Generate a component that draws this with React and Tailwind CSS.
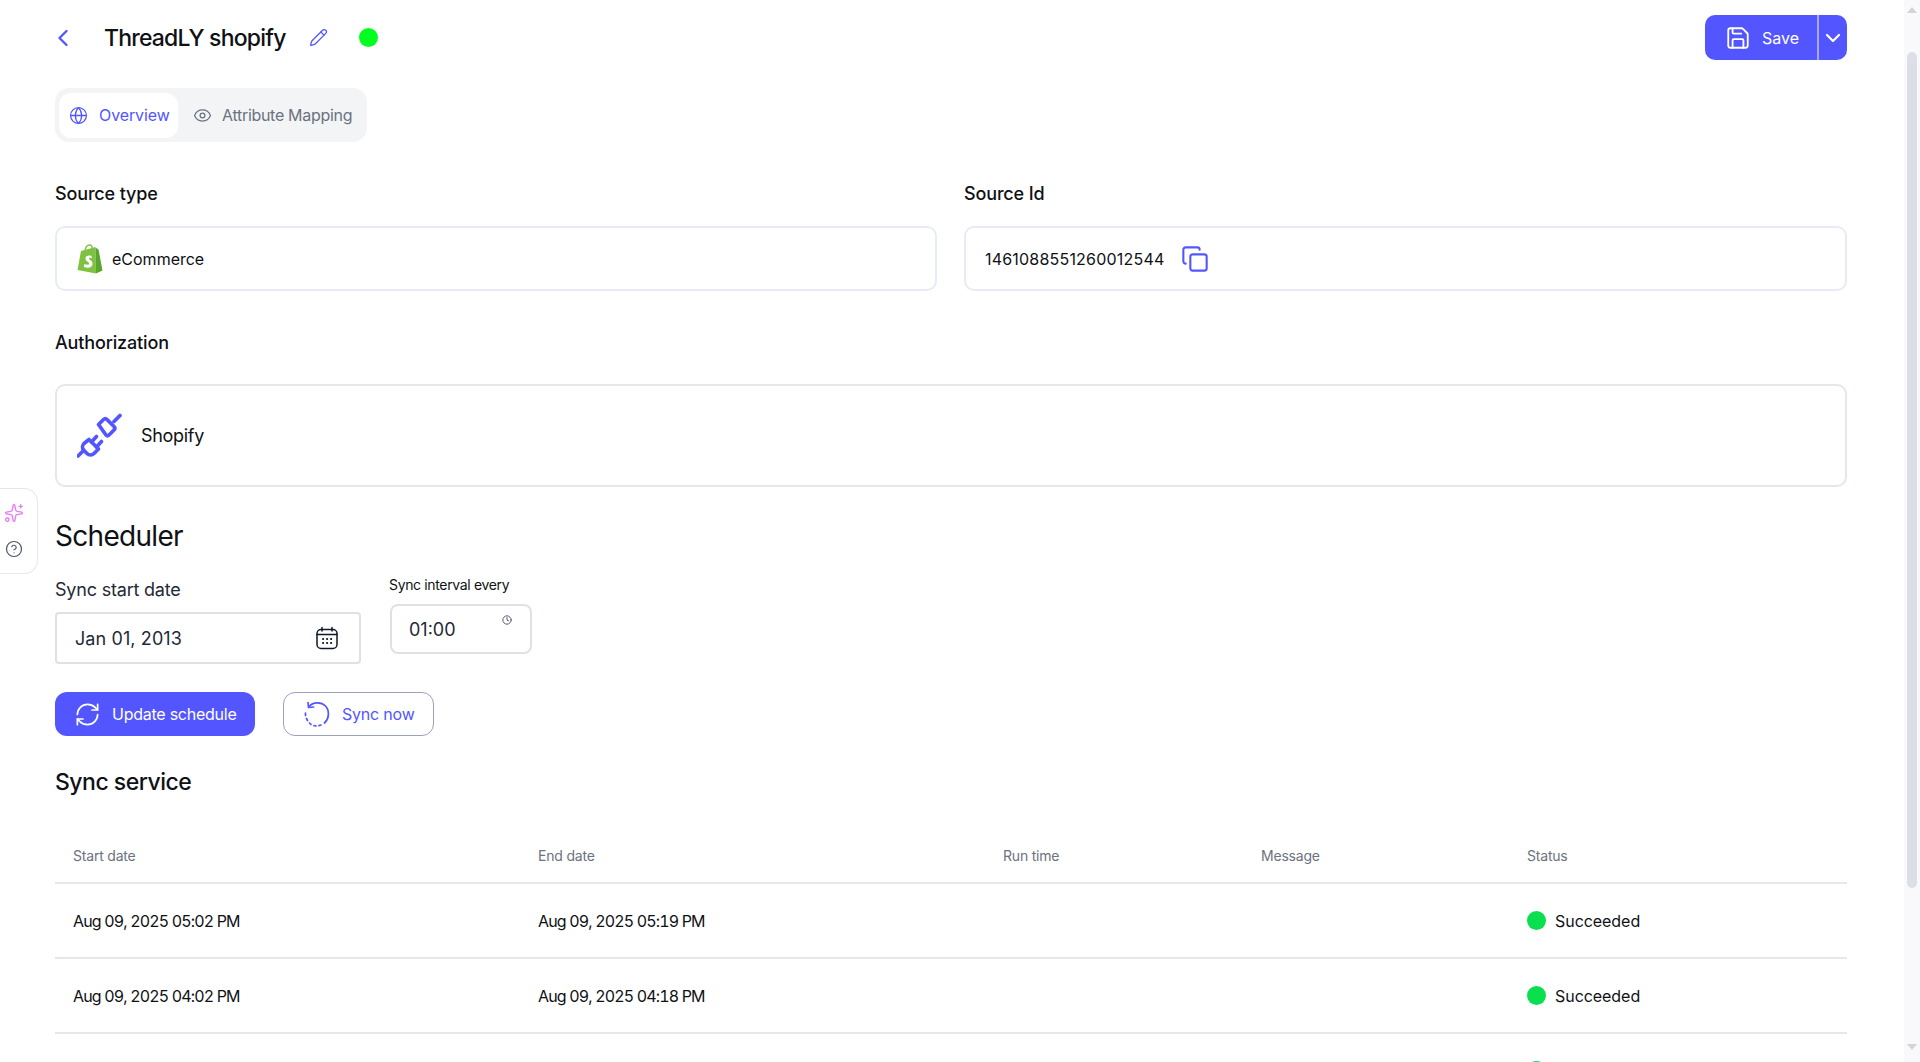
import React from "react";
import { ChevronLeft, ChevronDown, Pencil, Globe, Eye, Save, Copy, RefreshCw, CircleHelp, Sparkles, Clock } from "lucide-react";

const rows = [
  { start: "Aug 09, 2025 05:02 PM", end: "Aug 09, 2025 05:19 PM", status: "Succeeded" },
  { start: "Aug 09, 2025 04:02 PM", end: "Aug 09, 2025 04:18 PM", status: "Succeeded" },
  { start: "", end: "", status: "" },
];

function ShopifyLogo() {
  return (
    <svg width="26" height="30" viewBox="0 0 26 30">
      <path d="M4 7 L18.5 3 L19 29.5 L0.5 26 Z" fill="#7fc241" />
      <path d="M18.5 3.5 L21.5 5.5 L25.5 26.5 L19 29.5 Z" fill="#5aa52f" />
      <path d="M8 7 C8.5 3 10.5 1 12.5 1 C14.5 1 15.5 3 15.5 6" fill="none" stroke="#7fc241" strokeWidth="1.4" />
      <path d="M14.5 12 C12 11 8.5 11.5 8.5 14.5 C8.5 17.5 12 17.5 12 19.5 C12 21 9.5 21 7.5 20 L6.8 22.8 C10 24.5 15.5 24 15.5 19.5 C15.5 16.5 12 16 12 14.5 C12 13.5 13.5 13.5 14.8 14.2 Z" fill="#fff" />
    </svg>
  );
}

function PlugsIcon() {
  return (
    <svg width="46" height="46" viewBox="0 0 46 46" fill="none" stroke="#5356ff" strokeWidth="3.7" strokeLinecap="round" strokeLinejoin="round">
      <path d="M1 43 L6.5 37.5" />
      <path d="M12 26.5 L21.5 36 L17 40.5 C15 42.5 12 42.5 10 40.5 L7 37.5 C5 35.5 5 32.5 7 30.5 Z" />
      <path d="M14.5 29 L19.5 23.5 M19.5 34 L24.5 28.5" />
      <path d="M43 2.5 L37 8.5" />
      <path d="M21.5 11.5 L26.5 6.5 C27.5 5.5 29 5.5 30 6.5 L37 13.5 C38 14.5 38 16 37 17 L32 22 C31 23 30 23 29 22 Z" />
    </svg>
  );
}

function CalendarIcon() {
  return (
    <svg width="24" height="24" viewBox="0 0 24 24" fill="none" stroke="#111827" strokeWidth="1.5" strokeLinecap="round">
      <rect x="2" y="3.5" width="20" height="19" rx="4" />
      <path d="M7 1.5 V5 M17 1.5 V5 M2 8.5 H22" />
      <path d="M8 13 H8.2 M12 13 H12.2 M16 13 H16.2 M8 17 H8.2 M12 17 H12.2 M16 17 H16.2" strokeWidth="2" />
    </svg>
  );
}

function DashedSyncIcon() {
  return (
    <svg width="26" height="26" viewBox="0 0 26 26" fill="none" stroke="#5356ff" strokeWidth="1.7" strokeLinecap="round">
      <path d="M5 5.5 C9 1 17 0.5 21.5 5 C26 10 25 18 20.5 22" />
      <path d="M17 24 L15 24.6 M12 25 L10 24.6 M7 23.5 L5.5 22 M3.5 19.5 L2.5 17.5 M1.5 14.5 L1.5 12" />
      <path d="M4 1.5 L4.5 6.5 L9.5 6" strokeLinejoin="round" />
    </svg>
  );
}

export default function App() {
  return (
    <div className="relative flex h-screen overflow-hidden bg-white text-[#0f1115] font-['Inter',sans-serif]">
      {/* Floating help rail */}
      <div className="absolute left-0 top-[488px] flex h-[86px] w-[38px] flex-col items-center justify-center gap-[17px] rounded-r-[14px] border border-l-0 border-[#e5e7eb] bg-white pb-[2px] pr-[9px]">
        <Sparkles size={20} strokeWidth={1.6} className="text-[#e879f9]" />
        <CircleHelp size={18} strokeWidth={1.6} className="text-[#4b5563]" />
      </div>

      {/* Main */}
      <main className="min-w-0 flex-1 pl-[54px] pr-[57px] pt-[15px]">
        {/* Header */}
        <div className="flex h-[45px] items-center justify-between">
          <div className="flex items-center">
            <ChevronLeft size={28} strokeWidth={2} className="ml-[-5px] text-[#5356ff]" />
            <h1 className="ml-[27px] text-[23px] font-medium leading-[30px] tracking-[-0.8px]">ThreadLY shopify</h1>
            <Pencil size={19} strokeWidth={1.6} className="ml-[23px] text-[#5356ff]" />
            <span className="ml-[31px] h-[19px] w-[19px] rounded-full bg-[#00ff1e]" />
          </div>
          <div className="flex h-[45px] w-[142px] overflow-hidden rounded-[10px] bg-[#5356ff] text-white">
            <div className="flex w-[112px] items-center gap-[11px] pl-[20px]">
              <Save size={26} strokeWidth={1.7} />
              <span className="text-[16px]">Save</span>
            </div>
            <div className="flex flex-1 items-center justify-center border-l-2 border-[#a5a8ff]">
              <ChevronDown size={24} strokeWidth={2.2} />
            </div>
          </div>
        </div>

        {/* Tabs */}
        <div className="ml-[1px] mt-[28px] flex h-[54px] w-[312px] items-center rounded-[14px] bg-[#f3f4f6] px-[4px]">
          <div className="flex h-[45px] w-[119px] items-center gap-[11px] rounded-[12px] bg-white pl-[10px] text-[#5356ff]">
            <Globe size={19} strokeWidth={1.6} />
            <span className="text-[16px] tracking-[-0.1px]">Overview</span>
          </div>
          <div className="flex items-center gap-[10px] pl-[15px] text-[#6b7280]">
            <Eye size={19} strokeWidth={1.6} />
            <span className="text-[16px] tracking-[-0.3px]">Attribute Mapping</span>
          </div>
        </div>

        {/* Source */}
        <div className="ml-[1px] mt-[41px] grid grid-cols-[882px_883px] gap-x-[27px]">
          <div>
            <p className="text-[18px] font-medium leading-[22px] tracking-[-0.15px]">Source type</p>
            <div className="mt-[21px] flex h-[65px] items-center gap-[9px] rounded-[10px] border-2 border-[#e8ebf5] pl-[20px]">
              <ShopifyLogo />
              <span className="text-[16px]">eCommerce</span>
            </div>
          </div>
          <div>
            <p className="text-[18px] font-medium leading-[22px] tracking-[-0.15px]">Source Id</p>
            <div className="mt-[21px] flex h-[65px] items-center gap-[17px] rounded-[10px] border-2 border-[#e8ebf5] pl-[19px]">
              <span className="text-[16px] tracking-[0.2px]">1461088551260012544</span>
              <Copy size={28} strokeWidth={1.8} className="text-[#5356ff]" />
            </div>
          </div>
        </div>

        {/* Authorization */}
        <p className="ml-[1px] mt-[41px] text-[18px] font-medium leading-[22px] tracking-[-0.15px]">Authorization</p>
        <div className="ml-[1px] mt-[30px] flex h-[103px] items-center gap-[18px] rounded-[10px] border-2 border-[#e5e7eb] pl-[20px]">
          <PlugsIcon />
          <span className="text-[18px] tracking-[-0.3px]">Shopify</span>
        </div>

        {/* Scheduler */}
        <h2 className="ml-[1px] mt-[32px] text-[28px] font-normal leading-[34px] tracking-[-0.7px]">Scheduler</h2>
        <div className="ml-[1px] mt-[23px] flex gap-[28px]">
          <div className="pt-[3px]">
            <p className="text-[18px] leading-[22px] tracking-[-0.2px] text-[#1f2937]">Sync start date</p>
            <div className="mt-[11px] flex h-[52px] w-[306px] items-center justify-between rounded-[4px] border-2 border-[#dfe1e6] pl-[18px] pr-[20px]">
              <span className="text-[18px] tracking-[0.1px] text-[#1f2937]">Jan 01, 2013</span>
              <CalendarIcon />
            </div>
          </div>
          <div>
            <p className="text-[14px] leading-[18px] tracking-[-0.35px]">Sync interval every</p>
            <div className="relative ml-[1px] mt-[10px] flex h-[50px] w-[142px] items-center rounded-[8px] border-2 border-[#dfe1e6] pl-[17px]">
              <span className="text-[18px] text-[#1f2937]">01:00</span>
              <Clock size={10} strokeWidth={2} className="absolute right-[18px] top-[9px] text-[#374151]" />
            </div>
          </div>
        </div>

        <div className="ml-[1px] mt-[28px] flex gap-[28px]">
          <button className="flex h-[44px] w-[200px] items-center gap-[11px] rounded-[12px] bg-[#5356ff] pl-[19px] text-white">
            <RefreshCw size={27} strokeWidth={1.5} />
            <span className="text-[16px] tracking-[-0.25px]">Update schedule</span>
          </button>
          <button className="flex h-[44px] w-[151px] items-center gap-[12px] rounded-[12px] border border-[#9aa0bd] pl-[20px] text-[#5356ff]">
            <DashedSyncIcon />
            <span className="text-[16px] tracking-[-0.2px]">Sync now</span>
          </button>
        </div>

        {/* Sync service */}
        <h2 className="ml-[1px] mt-[31px] text-[23px] font-medium leading-[30px] tracking-[-0.5px]">Sync service</h2>
        <div className="ml-[1px] mt-[32px]">
          <div className="grid h-[55px] grid-cols-[465px_465px_258px_266px_1fr] items-center border-b-2 border-[#e5e7eb] pl-[18px] text-[14px] tracking-[-0.2px] text-[#6b7280]">
            <span>Start date</span>
            <span>End date</span>
            <span>Run time</span>
            <span>Message</span>
            <span>Status</span>
          </div>
          {rows.map((row, i) => (
            <div key={i} className="grid h-[75px] grid-cols-[465px_465px_258px_266px_1fr] items-center border-b-2 border-[#e5e7eb] pl-[18px] text-[16px]">
              <span className="tabular-nums tracking-[-0.85px]">{row.start}</span>
              <span className="tabular-nums tracking-[-0.85px]">{row.end}</span>
              <span />
              <span />
              <span className="flex items-center gap-[9px] tracking-[-0.05px]">
                <span className="h-[19px] w-[19px] rounded-full bg-[#0adf4f]" />
                {row.status}
              </span>
            </div>
          ))}
        </div>
      </main>

      {/* Page scrollbar */}
      <div className="flex w-[16px] shrink-0 flex-col items-center bg-[#f9f9fb]">
        <div className="mt-[7px] h-0 w-0 border-x-[5px] border-b-[6px] border-x-transparent border-b-[#d1d5db]" />
        <div className="mt-[39px] h-[836px] w-[10px] rounded-full bg-[#dcdfe6]" />
        <div className="mt-[156px] h-0 w-0 border-x-[5px] border-t-[6px] border-x-transparent border-t-[#d1d5db]" />
      </div>
    </div>
  );
}
